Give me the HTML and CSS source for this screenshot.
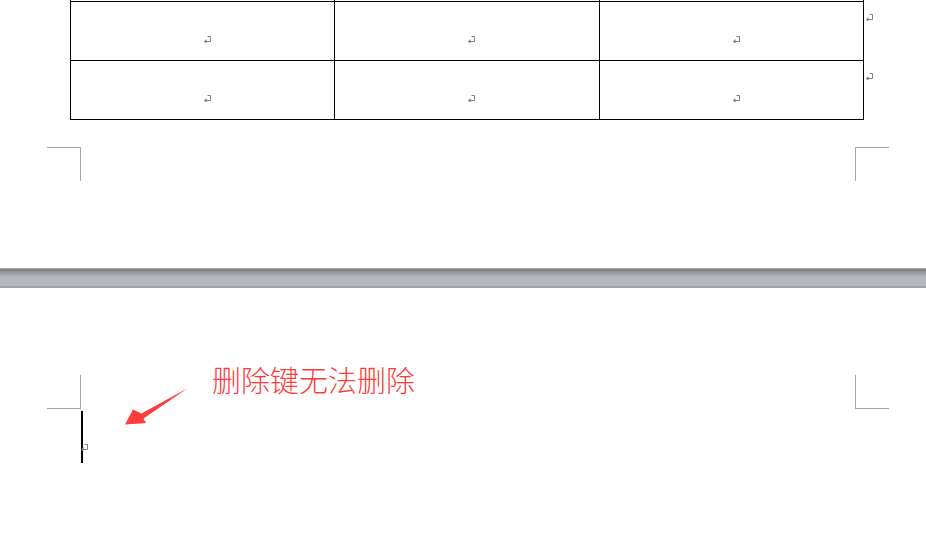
FILE: index.html
```html
<!DOCTYPE html>
<html lang="zh">
<head>
<meta charset="utf-8">
<title>Document</title>
<link rel="stylesheet" href="styles.css">
</head>
<body>
<div class="page page-top">
  <div class="table">
    <div class="cell strip"></div><div class="cell strip"></div><div class="cell strip"></div><div class="endcol"></div>
    <div class="cell"><svg class="pm" viewBox="0 0 7 7" width="7" height="7"><path d="M3.5 0.5H6.5V5.5H1.5" fill="none" stroke="#7f7f7f" stroke-width="1"/><path d="M0 5.5L2.5 3V8Z" fill="#7f7f7f"/></svg></div>
    <div class="cell"><svg class="pm" viewBox="0 0 7 7" width="7" height="7"><path d="M3.5 0.5H6.5V5.5H1.5" fill="none" stroke="#7f7f7f" stroke-width="1"/><path d="M0 5.5L2.5 3V8Z" fill="#7f7f7f"/></svg></div>
    <div class="cell"><svg class="pm" viewBox="0 0 7 7" width="7" height="7"><path d="M3.5 0.5H6.5V5.5H1.5" fill="none" stroke="#7f7f7f" stroke-width="1"/><path d="M0 5.5L2.5 3V8Z" fill="#7f7f7f"/></svg></div>
    <div class="endcol"><svg class="pm" viewBox="0 0 7 7" width="7" height="7"><path d="M3.5 0.5H6.5V5.5H1.5" fill="none" stroke="#7f7f7f" stroke-width="1"/><path d="M0 5.5L2.5 3V8Z" fill="#7f7f7f"/></svg></div>
    <div class="cell"><svg class="pm" viewBox="0 0 7 7" width="7" height="7"><path d="M3.5 0.5H6.5V5.5H1.5" fill="none" stroke="#7f7f7f" stroke-width="1"/><path d="M0 5.5L2.5 3V8Z" fill="#7f7f7f"/></svg></div>
    <div class="cell"><svg class="pm" viewBox="0 0 7 7" width="7" height="7"><path d="M3.5 0.5H6.5V5.5H1.5" fill="none" stroke="#7f7f7f" stroke-width="1"/><path d="M0 5.5L2.5 3V8Z" fill="#7f7f7f"/></svg></div>
    <div class="cell"><svg class="pm" viewBox="0 0 7 7" width="7" height="7"><path d="M3.5 0.5H6.5V5.5H1.5" fill="none" stroke="#7f7f7f" stroke-width="1"/><path d="M0 5.5L2.5 3V8Z" fill="#7f7f7f"/></svg></div>
    <div class="endcol"><svg class="pm" viewBox="0 0 7 7" width="7" height="7"><path d="M3.5 0.5H6.5V5.5H1.5" fill="none" stroke="#7f7f7f" stroke-width="1"/><path d="M0 5.5L2.5 3V8Z" fill="#7f7f7f"/></svg></div>
  </div>
  <div class="corners corners-bottom">
    <div class="corner c-bl"></div>
    <div class="corner c-br"></div>
  </div>
</div>
<div class="separator"></div>
<div class="page page-bottom">
  <div class="corners corners-top">
    <div class="corner c-tl"></div>
    <div class="corner c-tr"></div>
  </div>
  <div class="line">
    <span class="caret"></span>
    <svg class="pm pm-line" viewBox="0 0 7 7" width="7" height="7"><path d="M3.5 0.5H6.5V5.5H1.5" fill="none" stroke="#7f7f7f" stroke-width="1"/><path d="M0 5.5L2.5 3V8Z" fill="#7f7f7f"/></svg>
  </div>
  <div class="note">删除键无法删除</div>
  <svg class="arrow" viewBox="0 0 926 551" width="926" height="551"><path d="M188 388L141.5 413.5L133 409.5L125 424.5L146 423L143.5 418.5Z" fill="#ff3c3c"/></svg>
</div>
</body>
</html>
```

FILE: styles.css
```css
* { box-sizing: border-box; }
html, body { margin: 0; padding: 0; background: #ffffff; }
body {
  width: 926px;
  height: 551px;
  overflow: hidden;
  position: relative;
  font-family: "Noto Sans CJK SC", "Noto Sans", sans-serif;
}
.page-top { height: 268px; }
.table {
  display: grid;
  grid-template-columns: 265px 265px 264px 20px;
  grid-template-rows: 2px 59px 59px;
  margin-left: 70px;
}
.cell {
  border-right: 1px solid #000;
  border-bottom: 1px solid #000;
  display: flex;
  justify-content: center;
  align-items: flex-start;
  padding-top: 34px;
}
.cell:nth-child(4n+1) { border-left: 1px solid #000; }
.cell.strip { padding-top: 0; }
.cell .pm { margin-left: 9px; }
.endcol { padding-top: 12px; padding-left: 2px; }
.pm { display: block; }
.corners {
  display: flex;
  justify-content: space-between;
  padding: 0 37px 0 47px;
}
.corners-bottom { margin-top: 27px; }
.corners-top { margin-top: 87px; }
.corner { width: 34px; height: 34px; border: 0 solid #a6a6a6; }
.c-bl { border-top-width: 1px; border-right-width: 1px; }
.c-br { border-top-width: 1px; border-left-width: 1px; }
.c-tl { border-bottom-width: 1px; border-right-width: 1px; }
.c-tr { border-bottom-width: 1px; border-left-width: 1px; }
.separator {
  height: 20px;
  background: linear-gradient(to bottom, #a3a6ab 0, #a3a6ab 1px, #7b7f84 1px, #9a9da2 5px, #b4b7bb 9px, #b6b9bd 18px, #a0a4aa 18px, #a0a4aa 20px);
}
.line {
  position: relative;
  margin-top: 2px;
  margin-left: 81px;
  height: 52px;
  width: 10px;
}
.caret {
  display: block;
  width: 2px;
  height: 52px;
  background: #000;
}
.pm-line { position: absolute; left: 0; top: 33px; }
.note {
  position: absolute;
  left: 212px;
  top: 363px;
  font-size: 29px;
  font-weight: 300;
  line-height: 33px;
  color: #ff3c3c;
  white-space: nowrap;
}
.arrow { position: absolute; left: 0; top: 0; pointer-events: none; }
```
